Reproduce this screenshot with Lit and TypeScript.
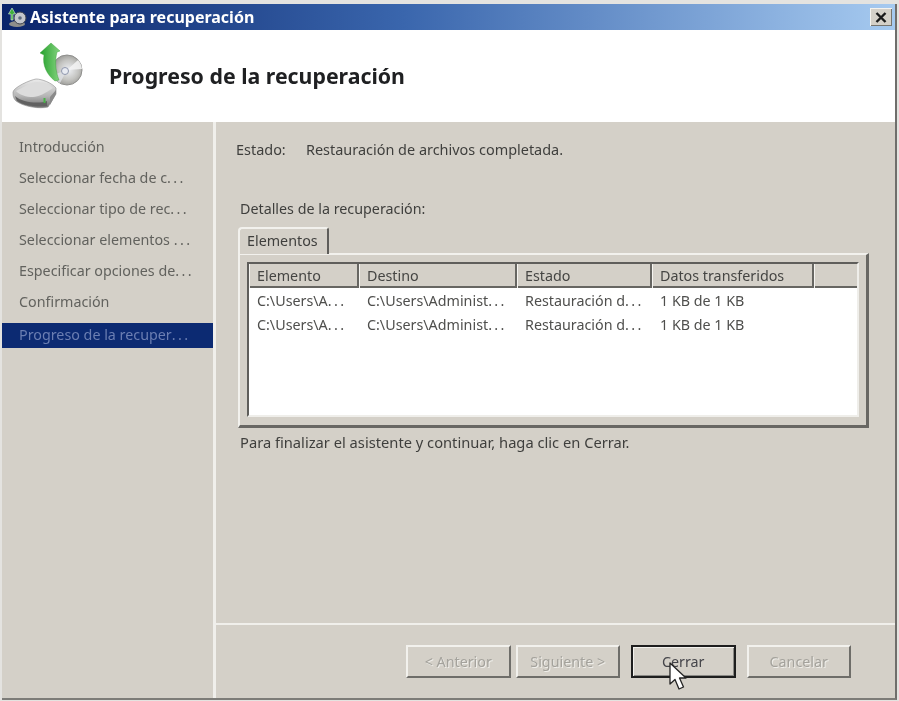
import { LitElement, html, css } from "lit";
import { customElement } from "lit/decorators.js";

const steps = [
  "Introducción",
  "Seleccionar fecha de c...",
  "Seleccionar tipo de rec...",
  "Seleccionar elementos ...",
  "Especificar opciones de...",
  "Confirmación",
  "Progreso de la recuper...",
];

const cols = ["Elemento", "Destino", "Estado", "Datos transferidos", ""];
const rows = [
  ["C:\\Users\\A...", "C:\\Users\\Administ...", "Restauración d...", "1 KB de 1 KB", ""],
  ["C:\\Users\\A...", "C:\\Users\\Administ...", "Restauración d...", "1 KB de 1 KB", ""],
];

const dotted = (t: string) =>
  t.endsWith("...") ? html`${t.slice(0, -3)}<span class="dots">...</span>` : t;

@customElement("app-root")
export class AppRoot extends LitElement {
  static styles = css`
    :host {
      display: block;
      position: relative;
      width: 899px;
      height: 701px;
      overflow: hidden;
      background: #e4e3e0;
      font-family: "Noto Sans", "Liberation Sans", Arial, sans-serif;
      font-size: 14.3px;
      color: #4a4a48;
    }
    .dots {
      letter-spacing: 2.4px;
    }
    .window {
      box-sizing: border-box;
      width: 895px;
      height: 696px;
      margin: 4px 0 0 2px;
      display: flex;
      flex-direction: column;
      border-right: 2px solid #6f6e6b;
      border-bottom: 2px solid #7d7c78;
      background: #d4d0c8;
      filter: blur(0.4px);
    }
    .titlebar {
      height: 26px;
      flex: none;
      display: flex;
      align-items: center;
      background: linear-gradient(90deg, #0a246a 0%, #3a66ad 45%, #a6caf0 100%);
      color: #fff;
      font-weight: 700;
      font-size: 16px;
    }
    .titlebar .small-icon {
      width: 20px;
      height: 22px;
      margin: 0 3px 0 5px;
      flex: none;
    }
    .titlebar .name {
      flex: 1;
    }
    .close {
      width: 22px;
      height: 18px;
      margin-right: 3px;
      display: flex;
      align-items: center;
      justify-content: center;
      background: #d4d0c8;
      box-shadow: inset 1px 1px 0 #f4f3ef, inset -1px -1px 0 #77756f;
    }
    .header {
      height: 92px;
      flex: none;
      display: flex;
      align-items: center;
      background: #fff;
    }
    .header svg {
      width: 74px;
      height: 74px;
      margin: 0 0 0 9px;
      flex: none;
    }
    .header h1 {
      margin: 0 0 2px 24px;
      font-size: 21.3px;
      font-weight: 700;
      color: #1f2022;
    }
    .body {
      flex: 1;
      display: flex;
      min-height: 0;
    }
    .nav {
      width: 211px;
      flex: none;
      padding-top: 13px;
      border-right: 3px solid #f0efeb;
      display: flex;
      flex-direction: column;
      gap: 6px;
      color: #62625e;
    }
    .step {
      height: 25px;
      line-height: 24px;
      padding-left: 17px;
      white-space: nowrap;
    }
    .step.sel {
      margin-top: 2px;
      background: #0c2a72;
      color: #6b7eb2;
    }
    .main {
      flex: 1;
      display: flex;
      flex-direction: column;
      min-width: 0;
    }
    .status {
      display: flex;
      margin: 19px 0 0 20px;
      height: 17px;
      line-height: 17px;
      color: #3f3f3d;
      font-size: 14.45px;
    }
    .status .k {
      width: 70px;
    }
    .label {
      margin: 42px 0 0 24px;
      height: 17px;
      line-height: 17px;
      color: #3f3f3d;
    }
    .tabs {
      margin: 10px 0 0 22px;
      width: 631px;
    }
    .tab {
      box-sizing: border-box;
      width: 91px;
      height: 27px;
      line-height: 23px;
      padding-left: 7px;
      background: #d4d0c8;
      border-top: 2px solid #f2f1ed;
      border-left: 2px solid #f2f1ed;
      border-right: 2px solid #5e5d5a;
      border-radius: 4px 3px 0 0;
      position: relative;
      z-index: 1;
      margin-bottom: -1px;
      color: #3f3f3d;
    }
    .panel {
      box-sizing: border-box;
      height: 175px;
      padding: 7px;
      border-top: 2px solid #f2f1ed;
      border-left: 2px solid #f2f1ed;
      border-right: 3px solid #686763;
      border-bottom: 3px solid #686763;
    }
    .list {
      box-sizing: border-box;
      height: 155px;
      background: #fff;
      border-top: 2px solid #5f5e5b;
      border-left: 2px solid #5f5e5b;
      border-right: 2px solid #efeeea;
      border-bottom: 2px solid #efeeea;
    }
    .row {
      display: grid;
      grid-template-columns: 110px 158px 135px 162px 1fr;
    }
    .head {
      height: 22px;
      background: #d4d0c8;
      border-bottom: 2px solid #676662;
    }
    .head div {
      box-sizing: border-box;
      line-height: 24px;
      padding-left: 7px;
      border-left: 1px solid #f5f4f0;
      border-right: 2px solid #676662;
      color: #454543;
    }
    .head div:last-child {
      border-right: none;
    }
    .cell {
      height: 24px;
      line-height: 24px;
      padding-left: 8px;
      color: #4f4f4d;
      white-space: nowrap;
    }
    .body-rows {
      padding-top: 1px;
    }
    .hint {
      margin: 6px 0 0 24px;
      height: 17px;
      line-height: 17px;
      color: #3f3f3d;
      font-size: 14.7px;
    }
    .spacer {
      flex: 1;
    }
    .footer {
      flex: none;
      height: 75px;
      box-sizing: border-box;
      border-top: 2px solid #f0efeb;
      display: flex;
      padding: 20px 0 0 190px;
      gap: 5px;
    }
    .btn {
      box-sizing: border-box;
      width: 104.5px;
      height: 33px;
      display: flex;
      align-items: center;
      justify-content: center;
      background: #d4d0c8;
      border-top: 2px solid #f2f1ed;
      border-left: 2px solid #f2f1ed;
      border-right: 2px solid #6e6d69;
      border-bottom: 2px solid #6e6d69;
      color: #a4a29c;
      text-shadow: 1px 1px 0 #efeeea;
    }
    .btn.def {
      margin: 0 6px;
      color: #45454a;
      text-shadow: none;
      border: 2px solid #1e1e1e;
      box-shadow: inset 1px 1px 0 #f2f1ed, inset -1px -1px 0 #8a8985;
    }
    .cursor {
      position: absolute;
      left: 668px;
      top: 661px;
      width: 19px;
      height: 30px;
    }
  `;

  render() {
    return html`
      <div class="window">
        <div class="titlebar">
          <svg class="small-icon" viewBox="0 0 20 22">
            <ellipse cx="10" cy="18" rx="8" ry="3" fill="#8f8f8b" />
            <circle cx="13" cy="12" r="6" fill="#c3c6cc" stroke="#3f444e" />
            <circle cx="13" cy="12" r="1.8" fill="#5d6a80" />
            <path d="M4 14V8H1.5L5 2 8.5 8H6v6z" fill="#3fae3c" stroke="#e8f4e4" stroke-width=".6" />
          </svg>
          <span class="name">Asistente para recuperación</span>
          <div class="close">
            <svg width="12" height="11" viewBox="0 0 12 11">
              <path d="M1.5 1 10.5 10M10.5 1 1.5 10" stroke="#1a1a1a" stroke-width="2.4" fill="none" />
            </svg>
          </div>
        </div>
        <div class="header">
          <svg viewBox="11 39 74 74">
            <defs>
              <linearGradient id="hd" x1="0" y1="0" x2="0" y2="1">
                <stop offset="0" stop-color="#ececec" />
                <stop offset=".6" stop-color="#b4b4b4" />
                <stop offset="1" stop-color="#6e6e6e" />
              </linearGradient>
              <radialGradient id="cd" cx=".55" cy=".5" r=".6">
                <stop offset="0" stop-color="#eef0f4" />
                <stop offset=".55" stop-color="#c4c4c1" />
                <stop offset="1" stop-color="#8e8e8a" />
              </radialGradient>
              <linearGradient id="arr" x1="0" y1="0" x2="1" y2="0">
                <stop offset="0" stop-color="#23a02b" />
                <stop offset="1" stop-color="#86d480" />
              </linearGradient>
            </defs>
            <path d="M13 92C14 87 30 80 36 79 42 79 52 83 56 88V94L48 107C40 109 24 107 16 101 13 98 13 95 13 92Z" fill="url(#hd)" stroke="#8b8b8b" stroke-width=".6" />
            <path d="M16 91C23 87 32 82 37 82 44 82 50 85 53 88 46 93 38 97 33 97 26 97 20 95 16 91Z" fill="#dcdcdc" />
            <path d="M15 96C22 103 40 104 47 101V106C38 107 24 106 17 101Z" fill="#616161" />
            <path d="M50 97 56 90V94L50 105Z" fill="#8a8a8a" />
            <rect x="43.5" y="98" width="2" height="5" fill="#47b347" />
            <circle cx="67" cy="70" r="15" fill="url(#cd)" stroke="#8f8f8d" />
            <path d="M67 70 78 60A15 15 0 0 1 82 69Z" fill="#f4f4f4" opacity=".85" />
            <path d="M67 70 60 83A15 15 0 0 1 53 75Z" fill="#dfe1e6" opacity=".8" />
            <circle cx="65" cy="71" r="3.5" fill="#e8ebf2" stroke="#8f97ad" />
            <path d="M44 55 40 53 51 43 60 51 57 52C55 60 55 70 59 80L55 81C47 75 42 65 44 55Z" fill="url(#arr)" stroke="#2f9a2f" stroke-width=".4" />
          </svg>
          <h1>Progreso de la recuperación</h1>
        </div>
        <div class="body">
          <div class="nav">
            ${steps.map(
              (s, i) => html`<div class="step ${i === steps.length - 1 ? "sel" : ""}">${dotted(s)}</div>`
            )}
          </div>
          <div class="main">
            <div class="status">
              <span class="k">Estado:</span><span>Restauración de archivos completada.</span>
            </div>
            <div class="label">Detalles de la recuperación:</div>
            <div class="tabs">
              <div class="tab">Elementos</div>
              <div class="panel">
                <div class="list">
                  <div class="row head">${cols.map((c) => html`<div>${c}</div>`)}</div>
                  <div class="body-rows">
                    ${rows.map(
                      (r) => html`<div class="row">${r.map((c) => html`<div class="cell">${dotted(c)}</div>`)}</div>`
                    )}
                  </div>
                </div>
              </div>
            </div>
            <div class="hint">Para finalizar el asistente y continuar, haga clic en Cerrar.</div>
            <div class="spacer"></div>
            <div class="footer">
              <div class="btn">&lt; Anterior</div>
              <div class="btn">Siguiente &gt;</div>
              <div class="btn def">Cerrar</div>
              <div class="btn">Cancelar</div>
            </div>
          </div>
        </div>
      </div>
      <svg class="cursor" viewBox="0 0 19 30">
        <path d="M2 2V23L7 18.5 11 28 15.5 26 11.5 17H18Z" fill="#fff" stroke="#222" stroke-width="1.3" stroke-linejoin="round" />
      </svg>
    `;
  }
}
